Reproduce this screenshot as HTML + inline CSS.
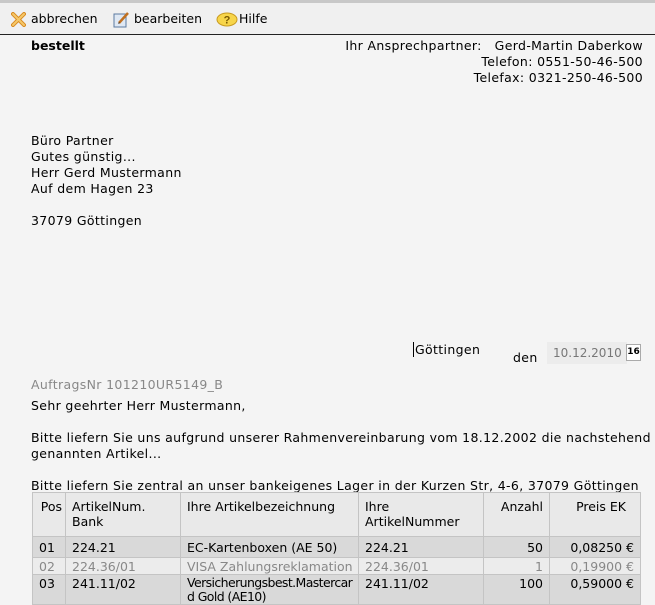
<!DOCTYPE html>
<html><head><meta charset="utf-8"><style>
*{margin:0;padding:0;box-sizing:border-box}
body{width:655px;height:592px;overflow:hidden;background:#f4f4f4;font-family:"DejaVu Sans",Verdana,sans-serif;font-size:12.5px;color:#000;position:relative}
.tb{position:absolute;left:0;top:0;width:655px;height:35px;background:#f0f0f0;border-top:3px solid #c8c8c8;border-bottom:1px solid #222}
.tb span{position:absolute;top:8px}
.a{position:absolute;white-space:nowrap;font-size:12.5px;letter-spacing:0.35px}
table{position:absolute;left:32px;top:492px;width:608px;border-collapse:collapse;table-layout:fixed;font-size:12.5px}
td{border:1px solid #c4c4c4;padding:0 6px;vertical-align:top;overflow:hidden;white-space:nowrap;line-height:15px}
thead td{background:#e9e9e9;height:44px;padding-top:6px}
.r1 td{background:#d9d9d9;height:21px;padding-top:3px}
.r2 td{background:#ececec;color:#888;height:16px;padding-top:1px}
.r3 td{background:#d9d9d9;height:30px;padding-top:1px}
.rt{text-align:right}
</style></head><body>
<div class="tb">
<svg style="position:absolute;left:11px;top:9px" width="15" height="15" viewBox="0 0 15 15"><path d="M2 2L13 13M13 2L2 13" stroke="#d88a20" stroke-width="4" stroke-linecap="round"/><path d="M2 2L13 13M13 2L2 13" stroke="#f5c86a" stroke-width="2" stroke-linecap="round"/></svg>
<span style="left:31px">abbrechen</span>
<svg style="position:absolute;left:113px;top:8px" width="17" height="17" viewBox="0 0 17 17"><rect x="1" y="3" width="12" height="13" fill="#dfe8f3" stroke="#5b7aa0"/><path d="M6 12L15 2" stroke="#c07020" stroke-width="2.5"/><path d="M5 13L6 11L7 12Z" fill="#333"/></svg>
<span style="left:134px">bearbeiten</span>
<svg style="position:absolute;left:216px;top:9px" width="22" height="15" viewBox="0 0 22 15"><ellipse cx="11" cy="7.5" rx="10" ry="6.5" fill="#f7d54a" stroke="#c89a20"/><text x="11" y="11.5" font-size="11" font-weight="bold" text-anchor="middle" fill="#7a5a00" font-family="Liberation Sans">?</text></svg>
<span style="left:239px">Hilfe</span>
</div>
<div class="a" style="left:31px;top:38px;font-weight:bold;letter-spacing:0">bestellt</div>
<div class="a" style="right:12px;top:38px;text-align:right;line-height:16px">Ihr Ansprechpartner:&nbsp;&nbsp; Gerd-Martin Daberkow<br>Telefon: 0551-50-46-500<br>Telefax: 0321-250-46-500</div>
<div class="a" style="left:31px;top:133px;line-height:16px">Büro Partner<br>Gutes günstig...<br>Herr Gerd Mustermann<br>Auf dem Hagen 23<br><br>37079 Göttingen</div>
<div class="a" style="left:413px;top:342px;border-left:1px solid #000;padding-left:1px">Göttingen</div>
<div class="a" style="left:513px;top:350px">den</div>
<div class="a" style="left:547px;top:342px;width:80px;height:22px;background:#ececec;color:#777;padding:4px 0 0 6px;letter-spacing:0;font-size:12px">10.12.2010</div>
<div class="a" style="left:626px;top:344px;width:15px;height:17px;background:#fff;border:1px solid #aaa;font-size:9px;letter-spacing:0;font-weight:bold;text-align:center;line-height:15px">16</div>
<div class="a" style="left:31px;top:377px;color:#888">AuftragsNr 101210UR5149_B</div>
<div class="a" style="left:31px;top:398px;line-height:16px">Sehr geehrter Herr Mustermann,<br><br>Bitte liefern Sie uns aufgrund unserer Rahmenvereinbarung vom 18.12.2002 die nachstehend<br>genannten Artikel...<br><br>Bitte liefern Sie zentral an unser bankeigenes Lager in der Kurzen Str, 4-6, 37079 Göttingen</div>
<table>
<colgroup><col style="width:33px"><col style="width:115px"><col style="width:178px"><col style="width:125px"><col style="width:66px"><col style="width:91px"></colgroup>
<thead><tr><td class="rt" style="padding-right:3px">Pos</td><td>ArtikelNum.<br>Bank</td><td>Ihre Artikelbezeichnung</td><td>Ihre<br>ArtikelNummer</td><td class="rt">Anzahl</td><td class="rt" style="padding-right:14px">Preis EK</td></tr></thead>
<tr class="r1"><td>01</td><td>224.21</td><td>EC-Kartenboxen (AE 50)</td><td>224.21</td><td class="rt">50</td><td class="rt">0,08250 €</td></tr>
<tr class="r2"><td>02</td><td>224.36/01</td><td>VISA Zahlungsreklamation</td><td>224.36/01</td><td class="rt">1</td><td class="rt">0,19900 €</td></tr>
<tr class="r3"><td>03</td><td>241.11/02</td><td style="line-height:14px;letter-spacing:-0.6px">Versicherungsbest.Mastercar<br>d Gold (AE10)</td><td>241.11/02</td><td class="rt">100</td><td class="rt">0,59000 €</td></tr>
</table>
</body></html>
